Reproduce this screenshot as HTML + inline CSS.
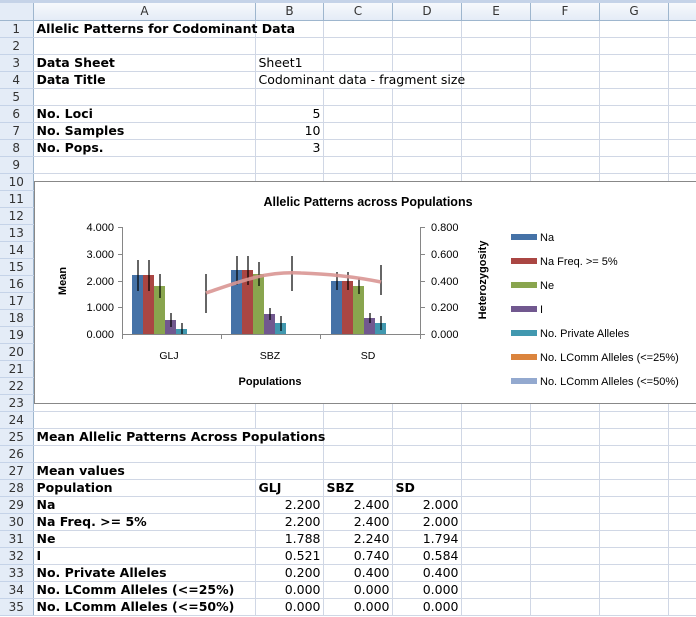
<!DOCTYPE html>
<html><head><meta charset="utf-8"><style>
*{margin:0;padding:0;box-sizing:border-box}
body{width:696px;height:617px;overflow:hidden;background:#fff;position:relative;font-family:"DejaVu Sans",Verdana,sans-serif;font-size:12.5px;color:#000}
#strip{position:absolute;left:0;top:0;width:696px;height:3px;background:#c5d3e8}
table{position:absolute;left:0;top:3px;width:708px;border-collapse:collapse;table-layout:fixed}
td{height:17px;border-right:1px solid #d0d7e5;border-bottom:1px solid #d0d7e5;white-space:nowrap;overflow:visible;padding:0 2px 0 3px;line-height:16px}
tr.h td{height:17px;background:linear-gradient(#f7f9fc,#e4ecf7);border-right:1px solid #9eb6ce;border-bottom:1px solid #9eb6ce;text-align:center;color:#333;font-size:12px}
td.n{background:#e4ecf7;border-right:1px solid #9eb6ce;border-bottom:1px solid #c5d3e8;text-align:center;color:#333;padding:0;font-size:12px}
b{font-weight:bold}
.r{text-align:right}
#chart{position:absolute;left:34px;top:181px;width:670px;height:223px;border:1px solid #888;background:#fff;font-family:"Liberation Sans",Arial,sans-serif}
</style></head><body>
<div id="strip"></div>
<table>
<colgroup><col style="width:33px"><col style="width:222px"><col style="width:68px"><col style="width:69px"><col style="width:69px"><col style="width:69px"><col style="width:69px"><col style="width:69px"><col style="width:40px"></colgroup>
<tr class="h"><td style="background:#e4ecf7"></td><td>A</td><td>B</td><td>C</td><td>D</td><td>E</td><td>F</td><td>G</td><td></td></tr>
<tr><td class="n">1</td><td><b>Allelic Patterns for Codominant Data</b></td><td></td><td></td><td></td><td></td><td></td><td></td><td></td></tr>
<tr><td class="n">2</td><td></td><td></td><td></td><td></td><td></td><td></td><td></td><td></td></tr>
<tr><td class="n">3</td><td><b>Data Sheet</b></td><td>Sheet1</td><td></td><td></td><td></td><td></td><td></td><td></td></tr>
<tr><td class="n">4</td><td><b>Data Title</b></td><td style="border-right:none">Codominant data - fragment size</td><td style="border-right:none"></td><td></td><td></td><td></td><td></td><td></td></tr>
<tr><td class="n">5</td><td></td><td></td><td></td><td></td><td></td><td></td><td></td><td></td></tr>
<tr><td class="n">6</td><td><b>No. Loci</b></td><td class="r">5</td><td></td><td></td><td></td><td></td><td></td><td></td></tr>
<tr><td class="n">7</td><td><b>No. Samples</b></td><td class="r">10</td><td></td><td></td><td></td><td></td><td></td><td></td></tr>
<tr><td class="n">8</td><td><b>No. Pops.</b></td><td class="r">3</td><td></td><td></td><td></td><td></td><td></td><td></td></tr>
<tr><td class="n">9</td><td></td><td></td><td></td><td></td><td></td><td></td><td></td><td></td></tr>
<tr><td class="n">10</td><td></td><td></td><td></td><td></td><td></td><td></td><td></td><td></td></tr>
<tr><td class="n">11</td><td></td><td></td><td></td><td></td><td></td><td></td><td></td><td></td></tr>
<tr><td class="n">12</td><td></td><td></td><td></td><td></td><td></td><td></td><td></td><td></td></tr>
<tr><td class="n">13</td><td></td><td></td><td></td><td></td><td></td><td></td><td></td><td></td></tr>
<tr><td class="n">14</td><td></td><td></td><td></td><td></td><td></td><td></td><td></td><td></td></tr>
<tr><td class="n">15</td><td></td><td></td><td></td><td></td><td></td><td></td><td></td><td></td></tr>
<tr><td class="n">16</td><td></td><td></td><td></td><td></td><td></td><td></td><td></td><td></td></tr>
<tr><td class="n">17</td><td></td><td></td><td></td><td></td><td></td><td></td><td></td><td></td></tr>
<tr><td class="n">18</td><td></td><td></td><td></td><td></td><td></td><td></td><td></td><td></td></tr>
<tr><td class="n">19</td><td></td><td></td><td></td><td></td><td></td><td></td><td></td><td></td></tr>
<tr><td class="n">20</td><td></td><td></td><td></td><td></td><td></td><td></td><td></td><td></td></tr>
<tr><td class="n">21</td><td></td><td></td><td></td><td></td><td></td><td></td><td></td><td></td></tr>
<tr><td class="n">22</td><td></td><td></td><td></td><td></td><td></td><td></td><td></td><td></td></tr>
<tr><td class="n">23</td><td></td><td></td><td></td><td></td><td></td><td></td><td></td><td></td></tr>
<tr><td class="n">24</td><td></td><td></td><td></td><td></td><td></td><td></td><td></td><td></td></tr>
<tr><td class="n">25</td><td style="border-right:none"><b>Mean Allelic Patterns Across Populations</b></td><td></td><td></td><td></td><td></td><td></td><td></td><td></td></tr>
<tr><td class="n">26</td><td></td><td></td><td></td><td></td><td></td><td></td><td></td><td></td></tr>
<tr><td class="n">27</td><td><b>Mean values</b></td><td></td><td></td><td></td><td></td><td></td><td></td><td></td></tr>
<tr><td class="n">28</td><td><b>Population</b></td><td><b>GLJ</b></td><td><b>SBZ</b></td><td><b>SD</b></td><td></td><td></td><td></td><td></td></tr>
<tr><td class="n">29</td><td><b>Na</b></td><td class="r">2.200</td><td class="r">2.400</td><td class="r">2.000</td><td></td><td></td><td></td><td></td></tr>
<tr><td class="n">30</td><td><b>Na Freq. &gt;= 5%</b></td><td class="r">2.200</td><td class="r">2.400</td><td class="r">2.000</td><td></td><td></td><td></td><td></td></tr>
<tr><td class="n">31</td><td><b>Ne</b></td><td class="r">1.788</td><td class="r">2.240</td><td class="r">1.794</td><td></td><td></td><td></td><td></td></tr>
<tr><td class="n">32</td><td><b>I</b></td><td class="r">0.521</td><td class="r">0.740</td><td class="r">0.584</td><td></td><td></td><td></td><td></td></tr>
<tr><td class="n">33</td><td><b>No. Private Alleles</b></td><td class="r">0.200</td><td class="r">0.400</td><td class="r">0.400</td><td></td><td></td><td></td><td></td></tr>
<tr><td class="n">34</td><td><b>No. LComm Alleles (&lt;=25%)</b></td><td class="r">0.000</td><td class="r">0.000</td><td class="r">0.000</td><td></td><td></td><td></td><td></td></tr>
<tr><td class="n">35</td><td><b>No. LComm Alleles (&lt;=50%)</b></td><td class="r">0.000</td><td class="r">0.000</td><td class="r">0.000</td><td></td><td></td><td></td><td></td></tr>
</table>
<div id="chart">
<svg width="670" height="223" viewBox="34 181 670 223" style="position:absolute;left:0;top:0" font-family="Liberation Sans, Arial, sans-serif">
<text x="367" y="205" text-anchor="middle" font-size="12.5" font-weight="bold">Allelic Patterns across Populations</text>
<g stroke="#868686" stroke-width="1" fill="none">
<line x1="121.5" y1="226" x2="121.5" y2="333"/>
<line x1="419.5" y1="226" x2="419.5" y2="333"/>
<line x1="121" y1="333.5" x2="420" y2="333.5"/>
<line x1="117" y1="226.5" x2="121" y2="226.5"/><line x1="117" y1="253.5" x2="121" y2="253.5"/><line x1="117" y1="280.5" x2="121" y2="280.5"/><line x1="117" y1="306.5" x2="121" y2="306.5"/>
<line x1="420" y1="226.5" x2="424" y2="226.5"/><line x1="420" y1="253.5" x2="424" y2="253.5"/><line x1="420" y1="280.5" x2="424" y2="280.5"/><line x1="420" y1="306.5" x2="424" y2="306.5"/><line x1="420" y1="333.5" x2="424" y2="333.5"/>
<line x1="121.5" y1="333" x2="121.5" y2="338"/><line x1="220.5" y1="333" x2="220.5" y2="338"/><line x1="319.5" y1="333" x2="319.5" y2="338"/><line x1="419.5" y1="333" x2="419.5" y2="338"/>
</g>
<g font-size="11" text-anchor="end">
<text x="113" y="230">4.000</text><text x="113" y="257">3.000</text><text x="113" y="284">2.000</text><text x="113" y="310">1.000</text><text x="113" y="337">0.000</text>
</g>
<g font-size="11">
<text x="430" y="230">0.800</text><text x="430" y="257">0.600</text><text x="430" y="284">0.400</text><text x="430" y="310">0.200</text><text x="430" y="337">0.000</text>
</g>
<text transform="translate(65,280) rotate(-90)" text-anchor="middle" font-size="11" font-weight="bold">Mean</text>
<text transform="translate(485,279) rotate(-90)" text-anchor="middle" font-size="11" font-weight="bold">Heterozygosity</text>
<g font-size="10.5" text-anchor="middle">
<text x="168" y="358">GLJ</text><text x="269" y="358">SBZ</text><text x="367" y="358">SD</text>
</g>
<text x="269" y="384" text-anchor="middle" font-size="11" font-weight="bold">Populations</text>
<g>
<rect x="131" y="274" width="11" height="59" fill="#4572a7"/><rect x="142" y="274" width="11" height="59" fill="#aa4643"/><rect x="153" y="285" width="11" height="48" fill="#89a54e"/><rect x="164" y="319" width="11" height="14" fill="#71588f"/><rect x="175" y="328" width="11" height="5" fill="#4198af"/>
<rect x="230" y="269" width="11" height="64" fill="#4572a7"/><rect x="241" y="269" width="11" height="64" fill="#aa4643"/><rect x="252" y="273" width="11" height="60" fill="#89a54e"/><rect x="263" y="313" width="11" height="20" fill="#71588f"/><rect x="274" y="322" width="11" height="11" fill="#4198af"/>
<rect x="330" y="280" width="11" height="53" fill="#4572a7"/><rect x="341" y="280" width="11" height="53" fill="#aa4643"/><rect x="352" y="285" width="11" height="48" fill="#89a54e"/><rect x="363" y="317" width="11" height="16" fill="#71588f"/><rect x="374" y="322" width="11" height="11" fill="#4198af"/>
</g>
<g stroke="#000" stroke-width="1.2">
<line x1="137" y1="259" x2="137" y2="290"/><line x1="148" y1="259" x2="148" y2="290"/><line x1="159" y1="273" x2="159" y2="297"/><line x1="170" y1="312" x2="170" y2="326"/><line x1="181" y1="322" x2="181" y2="333"/>
<line x1="236" y1="255" x2="236" y2="284"/><line x1="247" y1="255" x2="247" y2="284"/><line x1="258" y1="261" x2="258" y2="285"/><line x1="269" y1="307" x2="269" y2="319"/><line x1="280" y1="315" x2="280" y2="330"/>
<line x1="336" y1="271" x2="336" y2="289"/><line x1="347" y1="271" x2="347" y2="289"/><line x1="358" y1="277" x2="358" y2="293"/><line x1="369" y1="312" x2="369" y2="322"/><line x1="380" y1="315" x2="380" y2="329"/>
<line x1="205" y1="273" x2="205" y2="312"/><line x1="291" y1="255" x2="291" y2="290"/><line x1="380" y1="264" x2="380" y2="294"/>
</g>
<path d="M205 292 C240 280 265 270 300 272 C330 273 355 276 380 281" stroke="#d99694" stroke-width="3.5" fill="none" opacity="0.9"/>
<g font-size="11">
<rect x="510" y="233" width="26" height="6" fill="#4572a7"/><text x="539" y="240">Na</text>
<rect x="510" y="257" width="26" height="6" fill="#aa4643"/><text x="539" y="264">Na Freq. &gt;= 5%</text>
<rect x="510" y="281" width="26" height="6" fill="#89a54e"/><text x="539" y="288">Ne</text>
<rect x="510" y="305" width="26" height="6" fill="#71588f"/><text x="539" y="312">I</text>
<rect x="510" y="329" width="26" height="6" fill="#4198af"/><text x="539" y="336">No. Private Alleles</text>
<rect x="510" y="353" width="26" height="6" fill="#db843d"/><text x="539" y="360">No. LComm Alleles (&lt;=25%)</text>
<rect x="510" y="377" width="26" height="6" fill="#93a9cf"/><text x="539" y="384">No. LComm Alleles (&lt;=50%)</text>
</g>
</svg>
</div>
</body></html>
